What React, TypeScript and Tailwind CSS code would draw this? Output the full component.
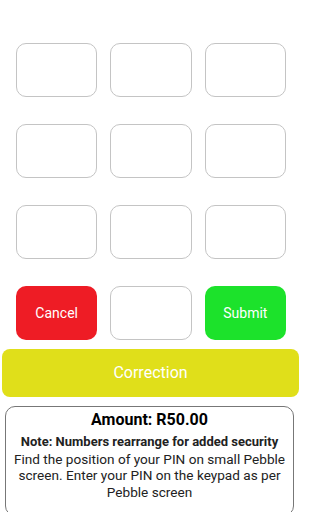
const keys = Array.from({ length: 9 }, (_, i) => i);

export default function App() {
  return (
    <div className="h-[512px] w-[302px] overflow-hidden bg-white font-['Roboto',sans-serif]">
      <div className="grid grid-cols-3 gap-x-[13px] gap-y-[27px] px-4 pt-[43px]">
        {keys.map((k) => (
          <button key={k} className="h-[54px] rounded-[10px] border border-[#c4c4c4] bg-white" />
        ))}
        <button className="h-[54px] rounded-[10px] bg-[#ee1c25] text-[14px] text-white">Cancel</button>
        <button className="h-[54px] rounded-[10px] border border-[#c4c4c4] bg-white" />
        <button className="h-[54px] rounded-[10px] bg-[#1ce22b] text-[14px] text-white">Submit</button>
      </div>

      <button className="mx-[2px] mt-[9px] h-[48px] w-[297px] rounded-[8px] bg-[#e0df1a] text-[16px] text-white">
        Correction
      </button>

      <div className="mt-[9px] ml-[5px] h-[110px] w-[289px] rounded-[10px] border border-[#777] px-1 pt-[3px] text-center text-[13.6px] leading-[16.7px] text-[#222]">
        <div className="text-[16px] font-bold leading-[20px] text-black">Amount: R50.00</div>
        <div className="mt-[4px] text-[13px] font-bold">Note: Numbers rearrange for added security</div>
        <div>Find the position of your PIN on small Pebble screen. Enter your PIN on the keypad as per Pebble screen</div>
      </div>
    </div>
  );
}
